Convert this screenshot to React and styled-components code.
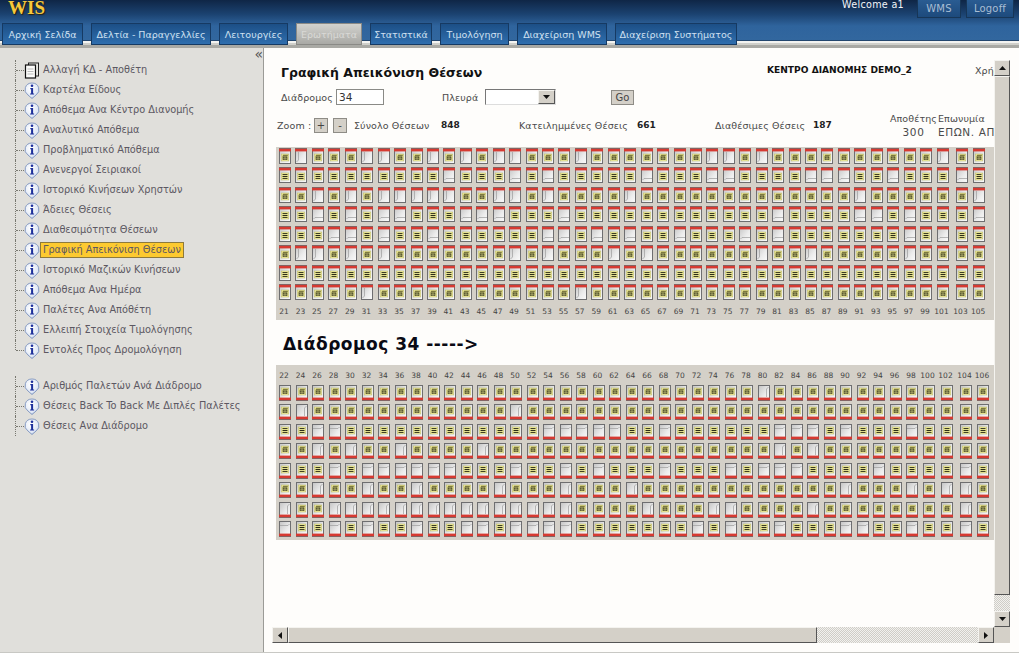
import React from 'react'
import styled, { createGlobalStyle } from 'styled-components'

const GlobalStyle = createGlobalStyle`
  html, body {
    margin: 0;
    padding: 0;
    background: #ffffff;
    overflow: hidden;
  }
  body, input {
    font-family: "DejaVu Sans", Verdana, sans-serif;
  }
`

const Page = styled.div`
  width: 1019px;
  height: 655px;
  display: flex;
  flex-direction: column;
  overflow: hidden;
`

/* header */
const Header = styled.header`
  height: 48px;
  flex: none;
  display: flex;
  flex-direction: column;
  background: linear-gradient(#0f2646 0, #1b4270 14px, #2f649d 26px, #33689f 48px);
`

const TopBar = styled.div`
  height: 22px;
  flex: none;
  display: flex;
  align-items: flex-start;
  padding-left: 8px;
`

const Logo = styled.div`
  font-family: "Liberation Serif", serif;
  font-weight: bold;
  font-size: 19px;
  line-height: 16px;
  color: #f6c83c;
  text-shadow: 1px 1px 1px #2a2008;
`

const Welcome = styled.div`
  margin-left: auto;
  margin-right: 13px;
  font-size: 9.6px;
  line-height: 9px;
  letter-spacing: 0.3px;
  color: #f2f4f8;
`

const TopTab = styled.div`
  width: ${p => p.$w}px;
  height: 18px;
  margin-right: ${p => p.$gap}px;
  display: flex;
  align-items: center;
  justify-content: center;
  box-sizing: border-box;
  font-size: 10px;
  letter-spacing: 0.2px;
  color: #a9bed4;
  background: linear-gradient(#2a5c92, #1d4a7c);
  border: 1px solid #173657;
  border-top: none;
`

const Nav = styled.nav`
  height: 26px;
  flex: none;
  display: flex;
  gap: 8px;
  box-sizing: border-box;
  padding: 1px 0 0 2px;
  background: linear-gradient(
    transparent 0 18px,
    #23466e 18px 19px,
    #f3f3f0 19px 21px,
    #cfcfca 21px 23px,
    #a9a9a4 23px 26px
  );
`

const Tab = styled.div`
  width: ${p => p.$w}px;
  height: 22px;
  box-sizing: border-box;
  display: flex;
  align-items: center;
  justify-content: center;
  font-size: 9.5px;
  white-space: nowrap;
  color: ${p => (p.$active ? '#d9d9d6' : '#cfe0f1')};
  border: 1px solid ${p => (p.$active ? '#8a8a86' : '#163a63')};
  background: ${p =>
    p.$active
      ? 'linear-gradient(#d2d2ce, #a9a9a5)'
      : 'linear-gradient(#1c4f86, #2f6eae)'};
`

/* layout */
const Main = styled.div`
  height: 604px;
  flex: none;
  display: flex;
  border-bottom: 1px solid #c8c8c4;
`

const Sidebar = styled.aside`
  width: 264px;
  flex: none;
  box-sizing: border-box;
  background: #e0dfdb;
  border-right: 1px solid #9b9b97;
  display: flex;
  flex-direction: column;
  padding-top: 12px;
  position: relative;
`

const Collapse = styled.span`
  position: absolute;
  top: -1px;
  right: 0;
  font-size: 14px;
  line-height: 14px;
  color: #555;
`

const TreeGroup = styled.ul`
  list-style: none;
  margin: 0 0 16px 0;
  padding: 0;
`

const TreeItem = styled.li`
  position: relative;
  height: 20px;
  display: flex;
  align-items: center;
  padding-left: 24px;
  &::before {
    content: '';
    position: absolute;
    left: 15px;
    top: 0;
    height: ${p => (p.$last ? '10px' : '20px')};
    border-left: 1px dotted #77776f;
  }
  &::after {
    content: '';
    position: absolute;
    left: 16px;
    top: 10px;
    width: 8px;
    border-top: 1px dotted #77776f;
  }
`

const TreeLabel = styled.span`
  font-size: 9.75px;
  line-height: 14px;
  white-space: nowrap;
  padding: 0 2px;
  color: #5c5862;
  border: 1px solid ${p => (p.$selected ? '#8d7a3c' : 'transparent')};
  background: ${p => (p.$selected ? '#fdca30' : 'transparent')};
`

const ContentPane = styled.div`
  flex: 1;
  min-width: 0;
  display: flex;
  flex-direction: column;
  background: #fefdfb;
  padding-right: 9px;
`

const ScrollArea = styled.div`
  height: 579px;
  flex: none;
  display: flex;
`

const Viewport = styled.main`
  flex: 1;
  min-width: 0;
  overflow: hidden;
`

/* form rows */
const TitleRow = styled.div`
  display: grid;
  grid-template-columns: 486px 208px 60px;
  align-items: center;
  height: 18px;
  margin-top: 15px;
  padding-left: 17px;
  white-space: nowrap;
`

const Title = styled.h1`
  margin: 0;
  font-size: 12.5px;
  font-weight: bold;
  color: #111;
`

const CenterName = styled.div`
  font-size: 9.1px;
  font-weight: bold;
  margin-top: -4px;
  color: #111;
`

const Caption = styled.span`
  font-size: 9.5px;
  letter-spacing: 0.1px;
  margin-top: ${p => p.$lift || 0}px;
  color: #4a4a4a;
  white-space: nowrap;
`

const FilterRow = styled.div`
  display: grid;
  grid-template-columns: 55px 106px 43px 126px 40px;
  align-items: center;
  height: 16px;
  margin-top: 8px;
  padding-left: 17px;
`

const TextBox = styled.input`
  width: 48px;
  height: 16px;
  box-sizing: border-box;
  padding: 0 2px;
  font-size: 10.5px;
  color: #333;
  background: #fff;
  border: 1px solid #8a8a86;
  outline: none;
`

const SelectBox = styled.div`
  width: 71px;
  height: 16px;
  box-sizing: border-box;
  display: flex;
  justify-content: flex-end;
  background: #fff;
  border: 1px solid;
  border-color: #777 #ddd #ddd #777;
`

const SelectArrow = styled.div`
  width: 15px;
  display: flex;
  align-items: center;
  justify-content: center;
  background: #d4d0c8;
  border: 1px solid;
  border-color: #f4f3ef #555 #555 #f4f3ef;
`

const Button = styled.div`
  width: ${p => p.$w}px;
  height: ${p => p.$h}px;
  box-sizing: border-box;
  display: flex;
  align-items: center;
  justify-content: center;
  font-size: 10px;
  color: #444;
  background: #d4d0c8;
  border: 1px solid #8e8c86;
`

const StatsRow = styled.div`
  display: grid;
  grid-template-columns: 37px 19px 21px 87px 78px 118px 78px 98px 76px 49px 80px;
  align-items: center;
  height: 28px;
  margin-top: 6px;
  padding-left: 13px;
`

const StatValue = styled.span`
  font-size: 9px;
  font-weight: bold;
  color: #222;
`

const StatStack = styled.div`
  display: flex;
  flex-direction: column;
  gap: 3px;
  font-size: 9.5px;
  line-height: 11px;
  letter-spacing: 0.1px;
  color: #4a4a4a;
  white-space: nowrap;
  text-align: ${p => p.$align};
`

const StackValue = styled.span`
  font-size: 10.5px;
  letter-spacing: 0.6px;
`

/* racks */
const Rack = styled.section`
  display: grid;
  grid-template-columns: ${p => p.$columns};
  grid-template-rows: ${p => p.$rows};
  width: 718px;
  height: ${p => p.$height}px;
  box-sizing: border-box;
  overflow: hidden;
  margin: ${p => p.$margin};
  padding: ${p => p.$padding};
  background: #d4d0c8;
`

const Slot = styled.div`
  width: 12px;
  height: 16px;
`

const PosLabel = styled.div`
  width: 10px;
  display: flex;
  align-items: center;
  justify-content: center;
  font-size: 7.5px;
  color: #444;
  white-space: nowrap;
`

const AisleHeading = styled.h2`
  margin: 0;
  height: 45px;
  box-sizing: border-box;
  padding: 13px 0 0 19px;
  font-size: 17px;
  line-height: 22px;
  font-weight: bold;
  letter-spacing: 0.5px;
  color: #0a0a14;
`

/* scrollbars */
const VScroll = styled.div`
  width: 16px;
  flex: none;
  margin-top: 12px;
  display: flex;
  flex-direction: column;
`

const HScroll = styled.div`
  height: 16px;
  flex: none;
  display: flex;
  margin-left: 8px;
`

const ScrollButton = styled.div`
  width: 16px;
  height: 16px;
  flex: none;
  box-sizing: border-box;
  display: flex;
  align-items: center;
  justify-content: center;
  background: #d4d0c8;
  border: 1px solid;
  border-color: #f4f3ef #555 #555 #f4f3ef;
`

const ScrollThumb = styled.div`
  flex: none;
  box-sizing: border-box;
  width: ${p => p.$w};
  height: ${p => p.$h};
  background: #d4d0c8;
  border: 1px solid;
  border-color: #f4f3ef #555 #555 #f4f3ef;
`

const ScrollTrack = styled.div`
  flex: 1;
  background-color: #f2f1ee;
  background-image: conic-gradient(#cfcdc7 25%, transparent 0 50%, #cfcdc7 0 75%, transparent 0);
  background-size: 2px 2px;
`

const ScrollCorner = styled.div`
  width: 16px;
  flex: none;
  background: #d4d0c8;
`

const Arrow = ({ dir }) => {
  const points = {
    up: '0,4 7,4 3.5,0',
    down: '0,0 7,0 3.5,4',
    left: '4,0 4,7 0,3.5',
    right: '0,0 0,7 4,3.5'
  }[dir]
  const flat = dir === 'up' || dir === 'down'
  return (
    <svg width={flat ? 7 : 4} height={flat ? 4 : 7} viewBox={flat ? '0 0 7 4' : '0 0 4 7'}>
      <polygon points={points} fill="#111" />
    </svg>
  )
}

const InfoIcon = () => (
  <svg width="16" height="17" viewBox="0 0 16 17" style={{ flex: 'none' }}>
    <defs>
      <radialGradient id="infoBall" cx="0.4" cy="0.35" r="0.75">
        <stop offset="0" stopColor="#ffffff" />
        <stop offset="0.7" stopColor="#dfe7f5" />
        <stop offset="1" stopColor="#8ea6d2" />
      </radialGradient>
    </defs>
    <path d="M8 1a7 6.6 0 0 1 4 12L8 16.5 4 13A7 6.6 0 0 1 8 1z" fill="url(#infoBall)" stroke="#6f88b8" strokeWidth="0.8" />
    <circle cx="8" cy="3.7" r="1.3" fill="#1c2f9a" />
    <path d="M6.3 6.1h2.8v5.3h1v1.1H6.1v-1.1h1v-4.2h-.8z" fill="#1c2f9a" />
  </svg>
)

const DocIcon = () => (
  <svg width="16" height="17" viewBox="0 0 16 17" style={{ flex: 'none' }}>
    <rect x="4.5" y="1" width="10" height="13" fill="#e8e8e4" stroke="#222" />
    <rect x="1.5" y="3" width="10" height="13" fill="#fbfbf9" stroke="#111" strokeWidth="1.2" />
    <path d="M3.5 7h6M3.5 9.5h6M3.5 12h6" stroke="#bbb" />
  </svg>
)

// one pallet position, red bar on the aisle side
const Cell = ({ full, kind, flip }) => {
  const barY = flip ? 12.6 : 0.8
  const top = flip ? 0 : 3
  return (
    <svg width="12" height="16" viewBox="0 0 12 16">
      <rect x="0.5" y="0.5" width="11" height="15" fill="url(#cellFill)" stroke="#6e6e70" />
      <rect x="0" y={barY} width="12" height="2.6" fill="#d63a32" />
      {full ? (
        <g transform={`translate(2.2 ${top + 3})`}>
          <rect width="7.6" height="7" fill="#f4f09a" stroke="#b5b26a" strokeWidth="0.5" />
          {kind === 'box' ? (
            <>
              <path d="M1 2.6L2 0.8h5L6 2.6z" fill="#7d793f" />
              <rect x="1.4" y="2.6" width="4.8" height="3.2" fill="#3d3c20" />
              <path d="M3.8 2.6v3.2M1.4 4.2h4.8" stroke="#dcd98a" strokeWidth="0.6" />
            </>
          ) : (
            <path d="M1.3 1.6h5M1.3 3.5h5M1.3 5.4h5" stroke="#2c2c18" strokeWidth="1" />
          )}
        </g>
      ) : kind === 'box' ? (
        <path d={flip ? 'M8.5 12V4M8.5 4L10.5 2' : 'M3.5 4v8M3.5 12L1.5 14'} stroke="#9c9c9c" strokeWidth="0.7" fill="none" />
      ) : (
        <path d={flip ? 'M1 4.5h8L10.5 3' : 'M11 11.5H3L1.5 13'} stroke="#9c9c9c" strokeWidth="0.7" fill="none" />
      )}
    </svg>
  )
}

const upperRows = [
  '1011100110101001110111' + '111100101111111111011',
  '1111111111011101011111' + '011100111100011011101',
  '1101010000011001011110' + '111111111111101111110',
  '1101010011100011101111' + '111111110111100101110',
  '1110010110111111001010' + '110111010111111101011',
  '1001010111111101011101' + '011111101101111101111',
  '1111111111111111111111' + '111111111111111111111',
  '1111101111111111110111' + '111111111111111111111'
]
const upperKinds = ['box', 'lines', 'box', 'lines', 'lines', 'box', 'lines', 'box']

const lowerRows = [
  '1111111111111111111111' + '111111101111111111111',
  '1011111111111101111111' + '111111111111111111111',
  '1100111111111111000001' + '101111110001011101111',
  '1101011011110111111111' + '111111110101111111111',
  '1110100000011101101011' + '101110100011110111101',
  '1101101101111011101110' + '111111111111011101001',
  '0110000000000000001111' + '011100111101111111101',
  '0110101101100100001111' + '111010110111001101101'
]
const lowerKinds = ['box', 'box', 'lines', 'box', 'lines', 'box', 'box', 'lines']

const upperLabels = Array.from({ length: 43 }, (_, i) => 21 + i * 2)
const lowerLabels = Array.from({ length: 43 }, (_, i) => 22 + i * 2)

const tabs = [
  { name: 'Αρχική Σελίδα', w: 81 },
  { name: 'Δελτία - Παραγγελλίες', w: 120 },
  { name: 'Λειτουργίες', w: 69 },
  { name: 'Ερωτήματα', w: 66, active: true },
  { name: 'Στατιστικά', w: 62 },
  { name: 'Τιμολόγηση', w: 69 },
  { name: 'Διαχείριση WMS', w: 90 },
  { name: 'Διαχείριση Συστήματος', w: 122 }
]

const mainTree = [
  'Καρτέλα Είδους',
  'Απόθεμα Ανα Κέντρο Διανομής',
  'Αναλυτικό Απόθεμα',
  'Προβληματικό Απόθεμα',
  'Ανενεργοί Σειριακοί',
  'Ιστορικό Κινήσεων Χρηστών',
  'Άδειες Θέσεις',
  'Διαθεσιμότητα Θέσεων',
  'Γραφική Απεικόνιση Θέσεων',
  'Ιστορικό Μαζικών Κινήσεων',
  'Απόθεμα Ανα Ημέρα',
  'Παλέτες Ανα Απόθέτη',
  'Ελλειπή Στοιχεία Τιμολόγησης',
  'Εντολές Προς Δρομολόγηση'
]

const extraTree = [
  'Αριθμός Παλετών Ανά Διάδρομο',
  'Θέσεις Back To Back Με Διπλές Παλέτες',
  'Θέσεις Ανα Διάδρομο'
]

const renderCells = (rows, kinds, flip) =>
  rows.flatMap((row, r) =>
    row.split('').map((v, c) => (
      <Slot key={`${r}-${c}`}>
        <Cell full={v === '1'} kind={kinds[r]} flip={flip} />
      </Slot>
    ))
  )

function App() {
  return (
    <Page>
      <GlobalStyle />
      <svg width="0" height="0" style={{ position: 'absolute' }}>
        <defs>
          <linearGradient id="cellFill" x1="0" y1="0" x2="1" y2="1">
            <stop offset="0" stopColor="#c4c4c4" />
            <stop offset="0.6" stopColor="#ececec" />
            <stop offset="1" stopColor="#fbfbfb" />
          </linearGradient>
        </defs>
      </svg>
      <Header>
        <TopBar>
          <Logo>WIS</Logo>
          <Welcome>Welcome a1</Welcome>
          <TopTab $w={44} $gap={5}>WMS</TopTab>
          <TopTab $w={48} $gap={5}>Logoff</TopTab>
        </TopBar>
        <Nav>
          {tabs.map((tab) => (
            <Tab key={tab.name} $w={tab.w} $active={tab.active}>{tab.name}</Tab>
          ))}
        </Nav>
      </Header>
      <Main>
        <Sidebar>
          <Collapse>«</Collapse>
          <TreeGroup>
            <TreeItem>
              <DocIcon />
              <TreeLabel>Αλλαγή ΚΔ - Αποθέτη</TreeLabel>
            </TreeItem>
            {mainTree.map((item, index) => (
              <TreeItem key={item} $last={index === mainTree.length - 1}>
                <InfoIcon />
                <TreeLabel $selected={item === 'Γραφική Απεικόνιση Θέσεων'}>{item}</TreeLabel>
              </TreeItem>
            ))}
          </TreeGroup>
          <TreeGroup>
            {extraTree.map((item) => (
              <TreeItem key={item}>
                <InfoIcon />
                <TreeLabel>{item}</TreeLabel>
              </TreeItem>
            ))}
          </TreeGroup>
        </Sidebar>
        <ContentPane>
          <ScrollArea>
            <Viewport>
              <TitleRow>
                <Title>Γραφική Απεικόνιση Θέσεων</Title>
                <CenterName>ΚΕΝΤΡΟ ΔΙΑΝΟΜΗΣ DEMO_2</CenterName>
                <Caption $lift={-4}>Χρήστης</Caption>
              </TitleRow>
              <FilterRow>
                <Caption>Διάδρομος</Caption>
                <TextBox defaultValue="34" />
                <Caption>Πλευρά</Caption>
                <SelectBox>
                  <SelectArrow><Arrow dir="down" /></SelectArrow>
                </SelectBox>
                <Button $w={23} $h={15}>Go</Button>
              </FilterRow>
              <StatsRow>
                <Caption>Zoom :</Caption>
                <Button $w={14} $h={15}>+</Button>
                <Button $w={14} $h={15}>-</Button>
                <Caption>Σύνολο Θέσεων</Caption>
                <StatValue>848</StatValue>
                <Caption>Κατειλημμένες Θέσεις</Caption>
                <StatValue>661</StatValue>
                <Caption>Διαθέσιμες Θέσεις</Caption>
                <StatValue>187</StatValue>
                <StatStack $align="center">
                  <span>Αποθέτης</span>
                  <StackValue>300</StackValue>
                </StatStack>
                <StatStack $align="left">
                  <span>Επωνυμία</span>
                  <StackValue>ΕΠΩΝ. ΑΠΟΘΕΤΗ</StackValue>
                </StatStack>
              </StatsRow>
              <Rack
                $columns="repeat(40, 16.45px) 19px 17.7px 20px"
                $rows="repeat(8, 19.43px) 16px"
                $height={173}
                $margin="8px 0 0 12px"
                $padding="1px 0 0 3px"
              >
                {renderCells(upperRows, upperKinds, false)}
                {upperLabels.map((n) => <PosLabel key={n}>{n}</PosLabel>)}
              </Rack>
              <AisleHeading>Διάδρομος 34 -----&gt;</AisleHeading>
              <Rack
                $columns="repeat(39, 16.5px) 18px 19px 17.5px 20px"
                $rows="20px repeat(8, 19.43px)"
                $height={175}
                $margin="0 0 0 12px"
                $padding="0 0 0 3px"
              >
                {lowerLabels.map((n) => <PosLabel key={n}>{n}</PosLabel>)}
                {renderCells(lowerRows, lowerKinds, true)}
              </Rack>
            </Viewport>
            <VScroll>
              <ScrollButton><Arrow dir="up" /></ScrollButton>
              <ScrollThumb $w="16px" $h="519px" />
              <ScrollTrack />
              <ScrollButton><Arrow dir="down" /></ScrollButton>
            </VScroll>
          </ScrollArea>
          <HScroll>
            <ScrollButton><Arrow dir="left" /></ScrollButton>
            <ScrollThumb $w="529px" $h="16px" />
            <ScrollTrack />
            <ScrollButton><Arrow dir="right" /></ScrollButton>
            <ScrollCorner />
          </HScroll>
        </ContentPane>
      </Main>
    </Page>
  )
}

export default App
